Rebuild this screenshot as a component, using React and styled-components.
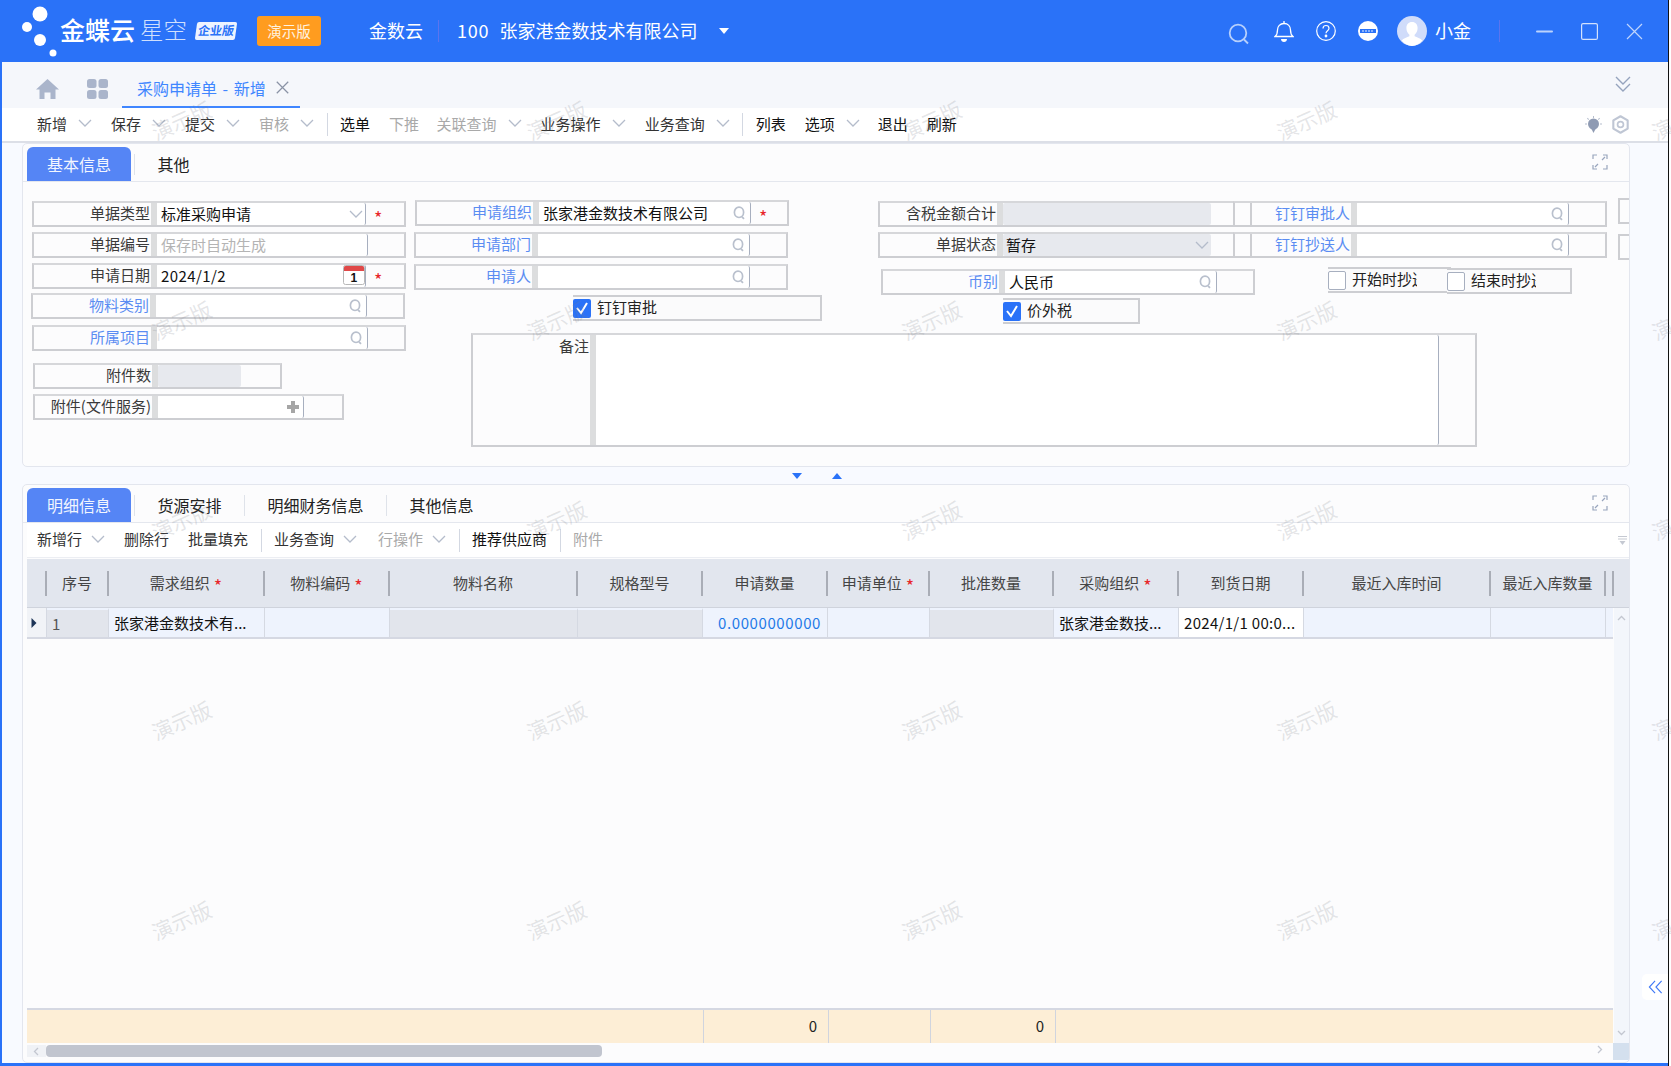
import React from "react"
import styled, { createGlobalStyle } from "styled-components"

const GlobalStyle = createGlobalStyle`
  html, body { margin: 0; padding: 0; background: #fff; }
  body { font-family: "Noto Sans CJK SC", "Liberation Sans", sans-serif; font-size: 15px; color: #222; overflow: hidden; }
  * { box-sizing: border-box; }
`

const COLS = "20px 62px 156px 125px 188px 125px 125px 102px 124px 125px 125px 187px 115px 8px"
const FOOT_COLS = "677px 125px 102px 125px 1fr"

const Root = styled.div`
  position: relative;
  width: 1671px;
  height: 1066px;
  overflow: hidden;
  background: #fff;
`
const Win = styled.div`
  width: 1669px;
  height: 1066px;
  display: flex;
  flex-direction: column;
  border-right: 1px solid #111;
`

/* top header */
const Header = styled.header`
  height: 62px;
  flex: none;
  background: #2a72f8;
  color: #fff;
  display: flex;
  align-items: center;
  padding-left: 20px;
`
const Word = styled.span`
  font-size: 25px;
  font-weight: 500;
  line-height: 1;
  padding-bottom: 3px;
  white-space: nowrap;
`
const WordLight = styled.span`
  font-size: 23.5px;
  font-weight: 300;
  line-height: 1;
  margin-left: 5px;
  padding-bottom: 3px;
  color: rgba(255, 255, 255, 0.78);
  white-space: nowrap;
`
const EditionBadge = styled.span`
  margin-left: 9px;
  width: 40px;
  height: 18px;
  background: #eef4ff;
  color: #2a72f8;
  font-size: 12px;
  font-weight: 700;
  line-height: 16px;
  text-align: center;
  transform: skewX(-8deg);
  border-radius: 2px;
`
const DemoBadge = styled.span`
  margin-left: 21px;
  width: 64px;
  height: 30px;
  background: #ff9c1f;
  border-radius: 3px;
  color: #fff3e0;
  font-size: 14.5px;
  line-height: 29px;
  text-align: center;
`
const HeadText = styled.span`
  font-size: 18px;
  line-height: 1;
  padding-bottom: 2px;
  margin-left: ${(p) => p.$ml || 0}px;
  letter-spacing: ${(p) => p.$wide || 0}px;
  white-space: nowrap;
`
const HeadSep = styled.span`
  width: 1px;
  height: 22px;
  background: #5b74ee;
  margin-left: ${(p) => p.$ml}px;
`
const DropTriangle = styled.span`
  margin-left: 22px;
  border-left: 5px solid transparent;
  border-right: 5px solid transparent;
  border-top: 6px solid #fff;
`
const HeadRight = styled.div`
  margin-left: auto;
  padding-right: 25px;
  display: flex;
  align-items: center;
`
const HeadIcon = styled.span`
  display: flex;
  margin-left: ${(p) => p.$ml || 0}px;
  margin-top: ${(p) => p.$mt || 0}px;
`

/* page under the header */
const Content = styled.main`
  flex: 1;
  min-height: 0;
  display: flex;
  flex-direction: column;
  background: #f8faff;
  border-left: 2px solid #2a72f8;
  border-bottom: 3px solid #2a72f8;
`
const TabBar = styled.div`
  height: 46px;
  flex: none;
  background: #f5f7fb;
  display: flex;
  align-items: stretch;
  padding: 0 37px 0 34px;
`
const TabBarIcon = styled.span`
  display: flex;
  align-items: center;
  padding-top: 8px;
  margin-left: ${(p) => p.$ml || 0}px;
`
const PageTab = styled.div`
  margin-left: 14px;
  width: 178px;
  padding: 7px 0 0 15px;
  display: flex;
  align-items: center;
  gap: 10px;
  color: #3f86ff;
  font-size: 16px;
  word-spacing: 2px;
  border-bottom: 2px solid #3f86ff;
  white-space: nowrap;
`
const TabBarEnd = styled.span`
  margin-left: auto;
  display: flex;
  align-items: center;
  padding-bottom: 2px;
`

const Toolbar = styled.div`
  height: ${(p) => p.$h}px;
  flex: none;
  background: #fff;
  display: flex;
  align-items: center;
  gap: 19px;
  padding-left: ${(p) => p.$pl}px;
  padding-right: ${(p) => p.$pr || 0}px;
  border-bottom: ${(p) => p.$line};
  svg.chev { margin-left: ${(p) => p.$chev}px; }
`
const Tool = styled.span`
  display: flex;
  align-items: center;
  font-size: 15px;
  line-height: 1;
  padding-bottom: 3px;
  margin-left: ${(p) => p.$ml || 0}px;
  white-space: nowrap;
  color: ${(p) => (p.$off ? "#a9a9a9" : p.$strong ? "#111" : "#333")};
`
const ToolSep = styled.span`
  width: 1px;
  height: 23px;
  margin: 0 -6.5px;
  background: #d3d8e2;
`
const ToolEnd = styled.span`
  margin-left: auto;
  display: flex;
  align-items: center;
  gap: 9px;
`

const Panel = styled.section`
  margin: 0 0 0 20px;
  width: 1608px;
  background: #fcfcfd;
  border: 1px solid #e3e6ee;
  border-radius: 5px;
  padding-top: 3px;
  display: flex;
  flex-direction: column;
  overflow: hidden;
  flex: ${(p) => (p.$grow ? "1" : "none")};
  min-height: 0;
  height: ${(p) => (p.$h ? p.$h + "px" : "auto")};
`
const Strip = styled.div`
  flex: none;
  height: 35px;
  padding: 0 21px 0 4px;
  display: flex;
  align-items: center;
  border-bottom: 1px solid #e4e7ee;
`
const Tab = styled.div`
  height: 34px;
  display: flex;
  align-items: center;
  font-size: 16px;
  line-height: 1;
  white-space: nowrap;
  padding: ${(p) => (p.$active ? "0 20px" : "0 22.5px")};
  background: ${(p) => (p.$active ? "#5585f5" : "transparent")};
  color: ${(p) => (p.$active ? "#f2f6ff" : "#222")};
  border-radius: ${(p) => (p.$active ? "6px 6px 0 0" : "0")};
`
const TabSep = styled.span`
  width: 1px;
  height: 21px;
  background: #dfe3ea;
  margin-left: ${(p) => p.$ml || 0}px;
`
const StripEnd = styled.span`
  margin-left: auto;
  display: flex;
  padding-bottom: 4px;
`

/* form */
const FormBody = styled.div`
  flex: 1;
  display: flex;
  padding: 16px 0 0 9px;
  min-width: 0;
`
const Col = styled.div`
  flex: none;
  width: ${(p) => p.$w}px;
  padding-top: ${(p) => p.$top || 0}px;
  display: flex;
  flex-direction: column;
`
const RightArea = styled.div`
  flex: none;
  display: flex;
  flex-direction: column;
`
const RightTop = styled.div`
  height: 135px;
  display: flex;
`
const Field = styled.div`
  flex: none;
  display: grid;
  grid-template-columns: ${(p) => p.$label || 117}px 6px ${(p) => p.$input}px 1fr;
  grid-template-rows: minmax(0, 1fr);
  width: ${(p) => p.$w || 374}px;
  height: ${(p) => p.$h || 26}px;
  margin-top: ${(p) => p.$mt || 0}px;
  margin-left: ${(p) => p.$ml || 0}px;
  border: 2px solid #cdced2;
  border-top-color: #d6d7da;
`
const Label = styled.div`
  display: flex;
  justify-content: flex-end;
  align-items: ${(p) => (p.$top ? "flex-start" : "center")};
  padding: ${(p) => (p.$top ? "3px 1px 0 0" : "0 1px 3px 0")};
  font-size: 15px;
  line-height: 1;
  white-space: nowrap;
  color: ${(p) => (p.$link ? "#5a8cf2" : "#3a3a3a")};
`
const Strut = styled.div`
  background: #dcddde;
`
const Input = styled.div`
  display: flex;
  align-items: center;
  justify-content: space-between;
  padding: 0 4px 0 ${(p) => (p.$gray ? 3 : 4)}px;
  font-size: 15px;
  line-height: 1;
  white-space: nowrap;
  background: ${(p) => (p.$gray ? "#e7e9ee" : "#fff")};
  color: ${(p) => (p.$hint ? "#b4b4b4" : "#111")};
  border-right: ${(p) => (p.$gray ? "none" : "1px solid #a7afbf")};
  border-radius: 2px;
  letter-spacing: ${(p) => p.$wide || 0}px;
  & > span { padding-bottom: 2px; }
  svg.chev { margin-right: -2px; }
`
const Suffix = styled.div`
  display: flex;
  align-items: flex-start;
  padding: 5px 0 0 8px;
  color: #e8262a;
  font-size: 18px;
  line-height: 1;
`
const CheckField = styled.div`
  flex: none;
  display: flex;
  align-items: center;
  gap: 6px;
  width: ${(p) => p.$w}px;
  height: 26px;
  margin-top: ${(p) => p.$mt || 0}px;
  margin-left: ${(p) => p.$ml || 0}px;
  border: 2px solid #cdced2;
  border-left: none;
  font-size: 15px;
  line-height: 1;
  background: #fbfbfc;
  white-space: nowrap;
`
const CheckBox = styled.span`
  flex: none;
  width: 18px;
  height: 19px;
  display: flex;
  align-items: center;
  justify-content: center;
  border-radius: 2px;
  background: ${(p) => (p.$on ? "#2a72f8" : "#fff")};
  border: ${(p) => (p.$on ? "none" : "1px solid #a7afbf")};
`
const CheckText = styled.span`
  padding-bottom: 3px;
  line-height: 1;
`
const CutText = styled.span`
  width: 65px;
  height: 22px;
  line-height: 19px;
  overflow: hidden;
`
const CheckRow = styled.div`
  display: flex;
  align-items: flex-start;
`
const CutField = styled.div`
  flex: none;
  width: 40px;
  height: 26px;
  margin-top: ${(p) => p.$mt || 0}px;
  border: 2px solid #cdced2;
`

const Divider = styled.div`
  flex: none;
  height: 17px;
  padding-left: 790px;
  display: flex;
  align-items: center;
  gap: 30px;
`
const ArrowDown = styled.span`
  border-left: 5px solid transparent;
  border-right: 5px solid transparent;
  border-top: 6px solid #2a72f8;
`
const ArrowUp = styled.span`
  border-left: 5px solid transparent;
  border-right: 5px solid transparent;
  border-bottom: 6px solid #2a72f8;
`

/* table */
const TableBlock = styled.div`
  flex: 1;
  min-height: 0;
  display: flex;
  flex-direction: column;
  margin-left: 4px;
`
const BarWrap = styled.div`
  flex: none;
`
const HeadRow = styled.div`
  flex: none;
  height: 49px;
  margin-top: 1px;
  background: #e2e6ee;
  border-bottom: 1px solid #cfd3dc;
  display: grid;
  grid-template-columns: ${COLS};
  align-items: center;
`
const HeadCell = styled.div`
  height: 25px;
  padding-bottom: 2px;
  display: flex;
  align-items: center;
  justify-content: center;
  gap: 4px;
  font-size: 15px;
  line-height: 1;
  color: #454545;
  white-space: nowrap;
  border-right: 2px solid #a9adb6;
`
const Star = styled.span`
  color: #e8262a;
  font-size: 18px;
  padding-top: 6px;
`
const TableArea = styled.div`
  flex: 1;
  min-height: 0;
  display: flex;
`
const TableMain = styled.div`
  width: 1586px;
  flex: none;
  display: flex;
  flex-direction: column;
`
const Row = styled.div`
  flex: none;
  height: 31px;
  background: #eef3fd;
  border-bottom: 2px solid #d5d8e2;
  display: grid;
  grid-template-columns: ${COLS};
  grid-template-rows: minmax(0, 1fr);
`
const Cell = styled.div`
  display: flex;
  align-items: center;
  justify-content: ${(p) => (p.$right ? "flex-end" : "flex-start")};
  padding: 0 ${(p) => (p.$right ? 6 : 4)}px 0 ${(p) => (p.$pl ? p.$pl : 4)}px;
  font-size: 15px;
  line-height: 1.3;
  white-space: nowrap;
  letter-spacing: ${(p) => p.$wide || 0}px;
  color: ${(p) => (p.$num ? "#1f7ae8" : p.$dim ? "#555" : "#111")};
  background: ${(p) => (p.$tone === "gray" ? "#e2e5ec" : p.$tone === "white" ? "#fff" : p.$tone === "head" ? "#f1f3f7" : "transparent")};
  border-top: ${(p) => (p.$tone === "gray" ? "2px solid #eef3fd" : "none")};
  border-right: 1px solid #d5d9e2;
`
const Spacer = styled.div`
  flex: 1;
`
const FootRow = styled.div`
  flex: none;
  height: 35px;
  background: #fdeed6;
  border-top: 2px solid #d5d8e2;
  display: grid;
  grid-template-columns: ${FOOT_COLS};
`
const FootCell = styled.div`
  display: flex;
  align-items: center;
  justify-content: flex-end;
  padding: 0 11px 3px 0;
  font-size: 15px;
  line-height: 1;
  border-right: ${(p) => (p.$last ? "none" : "1px solid #d0d4de")};
`
const VScroll = styled.div`
  flex: 1;
  margin-left: 1px;
  background: #f3f6fb;
  display: flex;
  flex-direction: column;
  align-items: center;
  justify-content: space-between;
  padding: 6px 0;
`
const HScroll = styled.div`
  flex: none;
  height: 19px;
  padding-top: 2px;
  display: flex;
  align-items: flex-start;
`
const ScrollBtn = styled.span`
  width: 19px;
  height: 12px;
  background: #f0f2f6;
  display: flex;
  align-items: center;
  justify-content: center;
`
const Thumb = styled.span`
  width: 556px;
  height: 12px;
  background: #c1c5cf;
  border-radius: 4px;
`
const HEnd = styled.span`
  margin-left: auto;
  display: flex;
  align-items: flex-start;
  gap: 9px;
`
const Corner = styled.span`
  width: 16px;
  height: 17px;
  margin-top: -2px;
  background: #d4e0ee;
`

/* things lying over the page */
const SideBtn = styled.div`
  position: absolute;
  left: 1642px;
  top: 974px;
  width: 26px;
  height: 26px;
  background: #fff;
  border-radius: 5px 0 0 5px;
  display: flex;
  align-items: center;
  justify-content: center;
`
const WatermarkLayer = styled.div`
  position: absolute;
  left: 0;
  top: 62px;
  right: 0;
  bottom: 0;
  overflow: hidden;
  pointer-events: none;
`
const WatermarkGrid = styled.div`
  margin: -42px 0 0 -6px;
  display: grid;
  grid-template-columns: repeat(5, 375px);
  grid-auto-rows: 200px;
`
const Watermark = styled.div`
  display: flex;
  align-items: center;
  justify-content: center;
  font-size: 21px;
  line-height: 1;
  color: rgba(120, 125, 135, 0.2);
  span { transform: rotate(-24deg); }
`

/* icons */
const Chevron = ({ color = "#b4bccb" }) => (
  <svg className="chev" width="14" height="8" viewBox="0 0 14 8" fill="none" stroke={color} strokeWidth="1.3">
    <path d="M1 1l6 6 6-6" />
  </svg>
)
const Lens = () => (
  <svg width="13" height="14" viewBox="0 0 13 14" fill="none" stroke="#b9c0cd" strokeWidth="1.7">
    <ellipse cx="6" cy="6.3" rx="4.6" ry="5.2" />
    <path d="M9 10.8l2 2" />
  </svg>
)
const Tick = () => (
  <svg width="14" height="15" viewBox="0 0 14 15" fill="none" stroke="#fff" strokeWidth="2">
    <path d="M2 7l4 5 6-10" />
  </svg>
)
const CalendarWrap = styled.span`
  display: flex;
  margin-right: -4px;
`
const CalendarIcon = () => (
  <CalendarWrap>
    <svg width="22" height="20" viewBox="0 0 22 20">
      <rect x="0.5" y="0.5" width="21" height="19" rx="2" fill="#fff" stroke="#b8b8b8" />
      <path d="M1 6V2.5A1.5 1.5 0 0 1 2.5 1h17A1.5 1.5 0 0 1 21 2.5V6z" fill="#e04848" />
      <text x="11" y="17" fontSize="12" fontWeight="700" textAnchor="middle" fill="#111" fontFamily="Liberation Sans">1</text>
    </svg>
  </CalendarWrap>
)
const PlusIcon = () => (
  <svg width="12" height="12" viewBox="0 0 12 12" fill="#a6a6a6">
    <path d="M4 0h4v4h4v4H8v4H4V8H0V4h4z" />
  </svg>
)
const ExpandIcon = () => (
  <svg width="16" height="16" viewBox="0 0 16 16" fill="none" stroke="#98a5bd" strokeWidth="1.2">
    <path d="M1 5V1h4M11 1h4v4M15 11v4h-4M5 15H1v-4M13 3l-3 3M3 13l3-3" />
  </svg>
)
const Logo = () => (
  <svg width="40" height="62" viewBox="0 0 40 62" fill="#fff">
    <circle cx="20" cy="14" r="7.5" />
    <circle cx="7" cy="27" r="5" />
    <circle cx="20" cy="40" r="6" />
    <circle cx="33" cy="53" r="3.5" />
  </svg>
)
const SearchIcon = () => (
  <svg width="22" height="24" viewBox="0 0 22 24" fill="none" stroke="#b7d0fc" strokeWidth="1.8">
    <circle cx="10" cy="11" r="8.3" />
    <path d="M16 17.5l4 4" />
  </svg>
)
const BellIcon = () => (
  <svg width="20" height="23" viewBox="0 0 20 23" fill="none" stroke="#fff" strokeWidth="1.3">
    <path d="M1 16.5c2-1.5 2.5-3 2.5-6.5 0-3.6 2.5-6.5 6.5-6.5s6.5 2.9 6.5 6.5c0 3.5.5 5 2.5 6.5z" />
    <path d="M10 1v2.5" />
    <path d="M7 19h6c0 2-1.3 3-3 3s-3-1-3-3z" fill="#fff" stroke="none" />
  </svg>
)
const HelpIcon = () => (
  <svg width="20" height="20" viewBox="0 0 20 20" fill="none" stroke="#fff" strokeWidth="1.2">
    <circle cx="10" cy="10" r="9.3" />
    <path d="M7 7.5c0-2 1.4-3 3-3s3 1 3 2.8c0 2.4-3 2.4-3 5" />
    <circle cx="10" cy="15" r="0.8" fill="#fff" />
  </svg>
)
const DotsIcon = () => (
  <svg width="20" height="20" viewBox="0 0 20 20">
    <circle cx="10" cy="10" r="10" fill="#fff" />
    <rect x="2" y="8" width="16" height="4" fill="#2a72f8" />
    <path d="M4 9.2h2v1.6H4zM7 9.2h2v1.6H7zM10 9.2h2v1.6h-2zM13 9.2h2v1.6h-2z" fill="#a9c6fb" />
  </svg>
)
const Avatar = () => (
  <svg width="30" height="30" viewBox="0 0 30 30">
    <circle cx="15" cy="15" r="15" fill="#d0dcfa" />
    <path d="M15 6c3.6 0 5.6 2.6 5.6 6 0 3-1.4 5.4-3 6.8v1.5c2.2 1.3 6 1.7 7.800 4.200A15 15 0 0 1 15 30a15 15 0 0 1-10.400-5.500c1.800-2.500 5.600-2.900 7.800-4.200v-1.500c-1.600-1.400-3-3.800-3-6.800 0-3.400 2-6 5.600-6z" fill="#fff" />
  </svg>
)
const MinIcon = () => (
  <svg width="17" height="3" viewBox="0 0 17 3">
    <rect width="17" height="2" y="0.5" rx="1" fill="#bcd3fc" />
  </svg>
)
const MaxIcon = () => (
  <svg width="17" height="17" viewBox="0 0 17 17" fill="none" stroke="#d3e1fd" strokeWidth="1.2">
    <rect x="0.6" y="0.6" width="15.8" height="15.8" rx="1.5" />
  </svg>
)
const CloseIcon = ({ size = 17, color = "#c0d5fc", width = 1.2 }) => (
  <svg width={size} height={size} viewBox="0 0 17 17" fill="none" stroke={color} strokeWidth={width}>
    <path d="M1 1l15 15M16 1L1 16" />
  </svg>
)
const HomeIcon = () => (
  <svg width="23" height="20" viewBox="0 0 23 20" fill="#aab5cb">
    <path d="M11.5 0L23 10.5h-3.500V20h-5v-6.500h-6V20h-5v-9.500H0z" />
  </svg>
)
const AppsIcon = () => (
  <svg width="21" height="20" viewBox="0 0 21 20" fill="#aab5cb">
    <rect width="9.5" height="9" rx="2.5" />
    <rect x="11.5" width="9.5" height="9" rx="2.5" />
    <rect y="11" width="9.5" height="9" rx="2.5" />
    <rect x="11.5" y="11" width="9.5" height="9" rx="2.5" />
  </svg>
)
const DoubleDown = () => (
  <svg width="16" height="16" viewBox="0 0 16 16" fill="none" stroke="#95a3bd" strokeWidth="1.4">
    <path d="M1 1l7 7 7-7M1 8l7 7 7-7" />
  </svg>
)
const BulbIcon = () => (
  <svg width="17" height="18" viewBox="0 0 17 18" fill="#8f9bb3">
    <circle cx="8.5" cy="8" r="5.5" />
    <path d="M6.5 13h4l-2 4z" />
    <path d="M8 0h1v2H8zM0 7.5h2v1H0zM15 7.5h2v1h-2zM2 2.5l.7-.7 1.4 1.4-.7.7zM15 2.5l-.7-.7-1.400 1.400.7.7z" fill="#b5bdcd" />
  </svg>
)
const GearIcon = () => (
  <svg width="19" height="19" viewBox="0 0 18 18" fill="none" stroke="#bfc6d4" strokeWidth="2">
    <path d="M9 1.2l6.800 3.900v7.800L9 16.800l-6.800-3.900V5.100z" strokeLinejoin="round" />
    <circle cx="9" cy="9" r="2.800" strokeWidth="1.600" />
  </svg>
)
const TinyFilter = () => (
  <svg width="9" height="9" viewBox="0 0 9 9" fill="#c5c9d2">
    <path d="M0 0h9v1H0zM0 2.5h9v1H0zM1.500 5h6L4.500 9z" />
  </svg>
)
const ScrollArrow = ({ d }) => (
  <svg width="9" height="9" viewBox="0 0 9 9" fill="none" stroke="#c3c7d0" strokeWidth="1.3">
    <path d={d} />
  </svg>
)
const RowMark = () => (
  <svg width="6" height="10" viewBox="0 0 6 10" fill="#1d3557">
    <path d="M0.500 0l5 5-5 5z" />
  </svg>
)
const DoubleLeft = () => (
  <svg width="15" height="14" viewBox="0 0 16 16" fill="none" stroke="#3f78f6" strokeWidth="1.3">
    <path d="M7.500 1L1 8l6.500 7M15 1L8.500 8l6.500 7" />
  </svg>
)

const mainTools = [
  { t: "新增", drop: true },
  { t: "保存", drop: true },
  { t: "提交", drop: true },
  { t: "审核", drop: true, off: true },
  { sep: true },
  { t: "选单", strong: true },
  { t: "下推", off: true },
  { t: "关联查询", drop: true, off: true, ml: -1.5 },
  { t: "业务操作", drop: true },
  { t: "业务查询", drop: true },
  { sep: true },
  { t: "列表", strong: true },
  { t: "选项", drop: true, strong: true },
  { t: "退出", strong: true, ml: -1 },
  { t: "刷新", strong: true },
]
const rowTools = [
  { t: "新增行", drop: true },
  { t: "删除行" },
  { t: "批量填充" },
  { sep: true },
  { t: "业务查询", drop: true },
  { t: "行操作", drop: true, off: true, ml: 2 },
  { sep: true },
  { t: "推荐供应商", strong: true },
  { sep: true },
  { t: "附件", off: true },
]
const columns = [
  { t: "" },
  { t: "序号" },
  { t: "需求组织", star: true },
  { t: "物料编码", star: true },
  { t: "物料名称" },
  { t: "规格型号" },
  { t: "申请数量" },
  { t: "申请单位", star: true },
  { t: "批准数量" },
  { t: "采购组织", star: true },
  { t: "到货日期" },
  { t: "最近入库时间" },
  { t: "最近入库数量" },
  { t: "" },
]

function renderTools(list) {
  return list.map((item, i) =>
    item.sep ? (
      <ToolSep key={i} />
    ) : (
      <Tool key={i} $off={item.off} $strong={item.strong} $ml={item.ml}>
        {item.t}
        {item.drop && <Chevron />}
      </Tool>
    )
  )
}

function FormField({ label, link, input = 209, labelW, value, hint, gray, star, wide, after, ...rest }) {
  return (
    <Field $input={input} $label={labelW} {...rest}>
      <Label $link={link}>{label}</Label>
      <Strut />
      <Input $gray={gray} $hint={hint} $wide={wide}>
        <span>{value}</span>
        {after}
      </Input>
      <Suffix>{star && "*"}</Suffix>
    </Field>
  )
}

export default function App() {
  return (
    <Root>
      <GlobalStyle />
      <Win>
        <Header>
          <Logo />
          <Word>金蝶云</Word>
          <WordLight>星空</WordLight>
          <EditionBadge>企业版</EditionBadge>
          <DemoBadge>演示版</DemoBadge>
          <HeadText $ml={48}>金数云</HeadText>
          <HeadSep $ml={15} />
          <HeadText $ml={18} $wide={0.8}>100</HeadText>
          <HeadText $ml={10}>张家港金数技术有限公司</HeadText>
          <DropTriangle />
          <HeadRight>
            <HeadIcon $mt={5}><SearchIcon /></HeadIcon>
            <HeadIcon $ml={24}><BellIcon /></HeadIcon>
            <HeadIcon $ml={22}><HelpIcon /></HeadIcon>
            <HeadIcon $ml={22}><DotsIcon /></HeadIcon>
            <HeadIcon $ml={19}><Avatar /></HeadIcon>
            <HeadText $ml={8}>小金</HeadText>
            <HeadSep $ml={28} />
            <HeadIcon $ml={36}><MinIcon /></HeadIcon>
            <HeadIcon $ml={28}><MaxIcon /></HeadIcon>
            <HeadIcon $ml={28}><CloseIcon /></HeadIcon>
          </HeadRight>
        </Header>

        <Content>
          <TabBar>
            <TabBarIcon><HomeIcon /></TabBarIcon>
            <TabBarIcon $ml={28}><AppsIcon /></TabBarIcon>
            <PageTab>
              采购申请单 - 新增
              <CloseIcon size={13} color="#8a93a5" width={1.6} />
            </PageTab>
            <TabBarEnd><DoubleDown /></TabBarEnd>
          </TabBar>

          <Toolbar $h={35} $pl={35} $pr={38} $chev={11} $line="2px solid #dcdfe7">
            {renderTools(mainTools)}
            <ToolEnd>
              <BulbIcon />
              <GearIcon />
            </ToolEnd>
          </Toolbar>

          <Panel $h={324}>
            <Strip>
              <Tab $active>基本信息</Tab>
              <TabSep $ml={3} />
              <Tab>其他</Tab>
              <StripEnd><ExpandIcon /></StripEnd>
            </Strip>
            <FormBody>
              <Col $w={382} $top={3}>
                <FormField label="单据类型" value="标准采购申请" star after={<Chevron />} />
                <FormField label="单据编号" value="保存时自动生成" hint input={211} $mt={5} />
                <FormField label="申请日期" value="2024/1/2" wide={0.4} star after={<CalendarIcon />} $mt={5} />
                <FormField label="物料类别" link input={211} after={<Lens />} $mt={4} $ml={-1} />
                <FormField label="所属项目" link input={211} after={<Lens />} $mt={6} />
                <FormField label="附件数" gray input={83} $w={249} $mt={12} $ml={1} />
                <FormField label="附件(文件服务)" input={146} after={<PlusIcon />} $w={311} $mt={5} $ml={1} />
              </Col>
              <RightArea>
                <RightTop>
                  <Col $w={464} $top={2}>
                    <FormField label="申请组织" link labelW={116} input={212} value="张家港金数技术有限公司" star after={<Lens />} $ml={1} />
                    <FormField label="申请部门" link labelW={116} input={212} after={<Lens />} $mt={6} />
                    <FormField label="申请人" link labelW={116} input={212} after={<Lens />} $mt={6} />
                    <CheckField $w={249} $ml={159} $mt={5}>
                      <CheckBox $on><Tick /></CheckBox>
                      <CheckText>钉钉审批</CheckText>
                    </CheckField>
                  </Col>
                  <Col $w={355} $top={3}>
                    <FormField label="含税金额合计" gray input={208} />
                    <FormField label="单据状态" gray input={208} value="暂存" after={<Chevron />} $mt={5} />
                    <FormField label="币别" link labelW={116} input={212} value="人民币" after={<Lens />} $mt={11} $ml={3} />
                    <CheckField $w={137} $ml={125} $mt={3}>
                      <CheckBox $on><Tick /></CheckBox>
                      <CheckText>价外税</CheckText>
                    </CheckField>
                  </Col>
                  <Col $w={385} $top={3}>
                    <FormField label="钉钉审批人" link labelW={116} input={212} after={<Lens />} />
                    <FormField label="钉钉抄送人" link labelW={116} input={212} after={<Lens />} $mt={5} />
                    <CheckRow>
                      <CheckField $w={123} $ml={95} $mt={9}>
                        <CheckBox />
                        <CutText>开始时抄送</CutText>
                      </CheckField>
                      <CheckField $w={125} $ml={-4} $mt={10}>
                        <CheckBox />
                        <CutText>结束时抄送</CutText>
                      </CheckField>
                    </CheckRow>
                  </Col>
                  <Col $w={40}>
                    <CutField />
                    <CutField $mt={10} />
                  </Col>
                </RightTop>
                <Field $w={1006} $h={114} $ml={57} $input={843}>
                  <Label $top>备注</Label>
                  <Strut />
                  <Input />
                  <Suffix />
                </Field>
              </RightArea>
            </FormBody>
          </Panel>

          <Divider>
            <ArrowDown />
            <ArrowUp />
          </Divider>

          <Panel $grow>
            <Strip>
              <Tab $active>明细信息</Tab>
              <TabSep $ml={3} />
              <Tab>货源安排</Tab>
              <TabSep />
              <Tab>明细财务信息</Tab>
              <TabSep />
              <Tab>其他信息</Tab>
              <StripEnd><ExpandIcon /></StripEnd>
            </Strip>
            <TableBlock>
              <BarWrap>
                <Toolbar $h={35} $pl={10} $pr={2} $chev={9} $line="1px solid #eceef3">
                  {renderTools(rowTools)}
                  <ToolEnd><TinyFilter /></ToolEnd>
                </Toolbar>
              </BarWrap>
              <HeadRow>
                {columns.map((c, i) => (
                  <HeadCell key={i}>
                    {c.t}
                    {c.star && <Star>*</Star>}
                  </HeadCell>
                ))}
              </HeadRow>
              <TableArea>
                <TableMain>
                  <Row>
                    <Cell $tone="head"><RowMark /></Cell>
                    <Cell $tone="gray" $dim $pl={5}>1</Cell>
                    <Cell $pl={5}>张家港金数技术有...</Cell>
                    <Cell />
                    <Cell $tone="gray" />
                    <Cell $tone="gray" />
                    <Cell $right $num $wide={0.6}>0.0000000000</Cell>
                    <Cell />
                    <Cell $tone="gray" />
                    <Cell $pl={5}>张家港金数技...</Cell>
                    <Cell $tone="white" $pl={5} $wide={0.3}>2024/1/1 00:0...</Cell>
                    <Cell />
                    <Cell />
                    <Cell />
                  </Row>
                  <Spacer />
                  <FootRow>
                    <FootCell />
                    <FootCell>0</FootCell>
                    <FootCell />
                    <FootCell>0</FootCell>
                    <FootCell $last />
                  </FootRow>
                </TableMain>
                <VScroll>
                  <ScrollArrow d="M1 6l3.5-3.5L8 6" />
                  <ScrollArrow d="M1 3l3.5 3.5L8 3" />
                </VScroll>
              </TableArea>
              <HScroll>
                <ScrollBtn><ScrollArrow d="M6 1L2.5 4.5 6 8" /></ScrollBtn>
                <Thumb />
                <HEnd>
                  <ScrollArrow d="M3 1l3.5 3.5L3 8" />
                  <Corner />
                </HEnd>
              </HScroll>
            </TableBlock>
          </Panel>
        </Content>
      </Win>

      <SideBtn><DoubleLeft /></SideBtn>

      <WatermarkLayer>
        <WatermarkGrid>
          {Array.from({ length: 25 }).map((_, i) => (
            <Watermark key={i}><span>演示版</span></Watermark>
          ))}
        </WatermarkGrid>
      </WatermarkLayer>
    </Root>
  )
}
